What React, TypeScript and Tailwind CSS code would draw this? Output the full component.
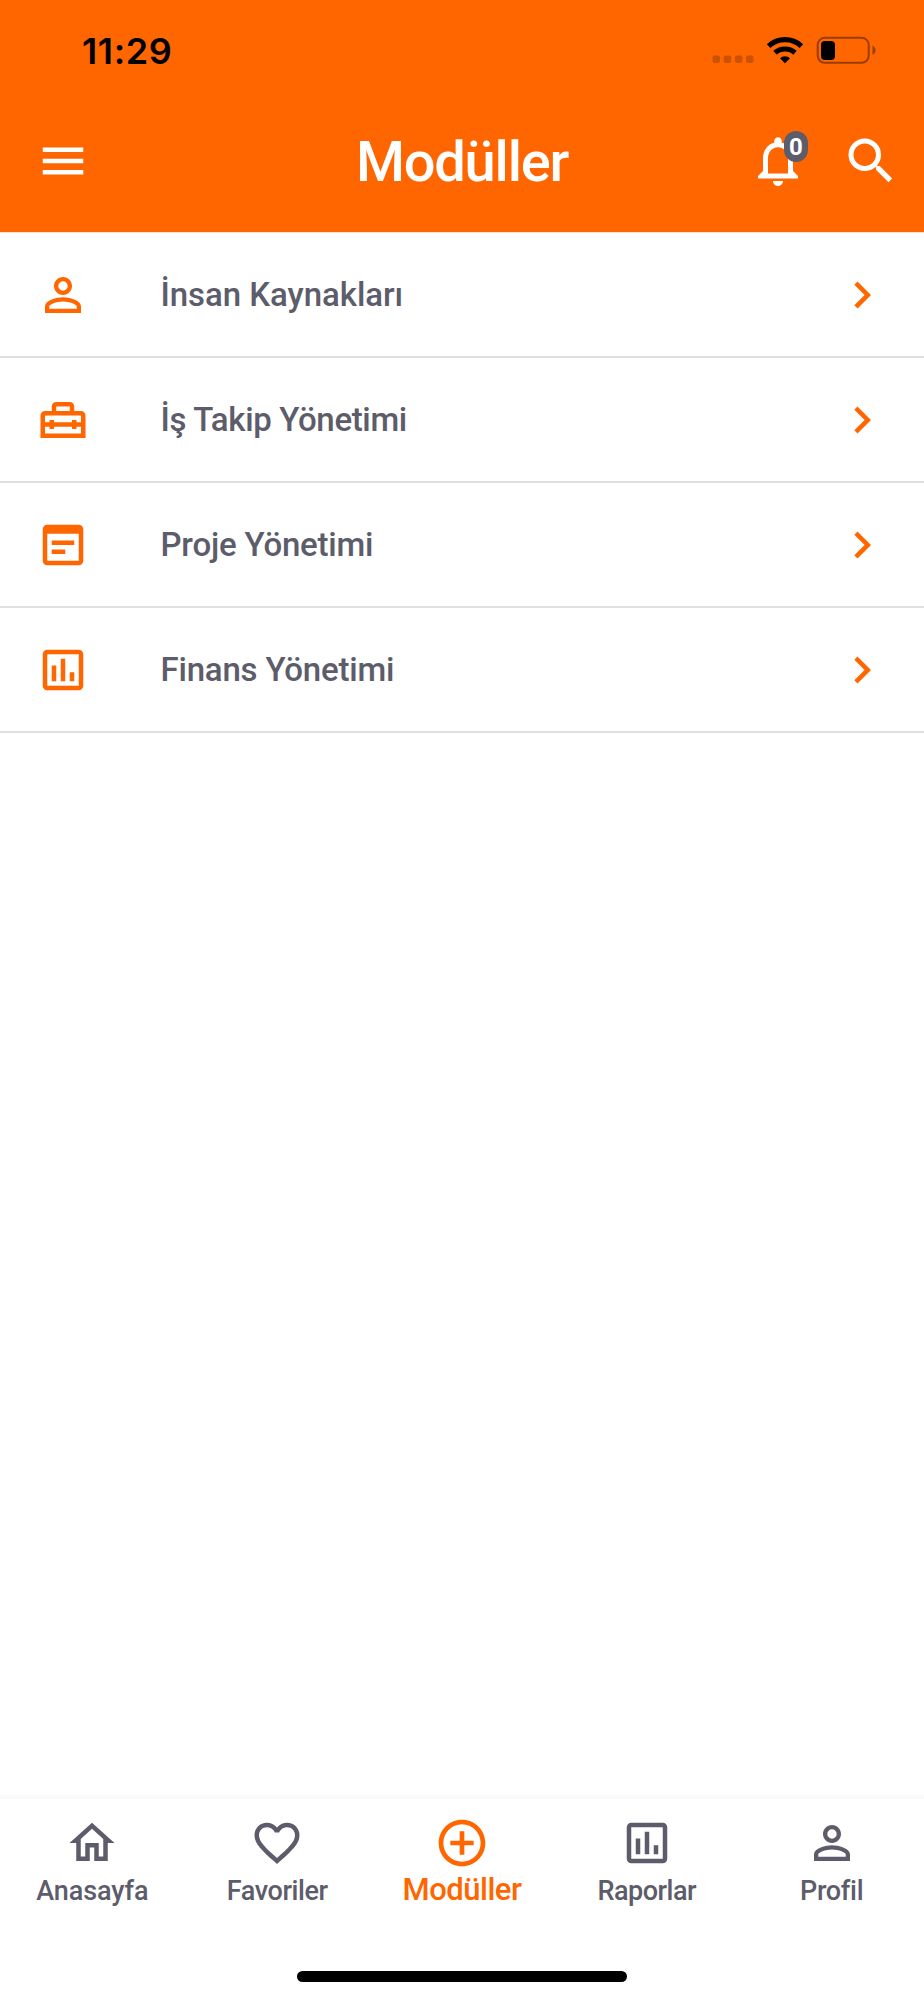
import type { IconType } from 'react-icons';
import {
  MdAddCircleOutline,
  MdChevronRight,
  MdFavoriteBorder,
  MdMenu,
  MdNotificationsNone,
  MdOutlineAssessment,
  MdOutlineHome,
  MdOutlineWysiwyg,
  MdPersonOutline,
  MdSearch,
} from 'react-icons/md';

interface ModuleItem {
  icon: React.ComponentType<{ className?: string }>;
  label: string;
  tracking: string;
}

interface TabItem {
  icon: IconType;
  isActive?: boolean;
  label: string;
  tracking: string;
}

function ToolboxIcon({ className }: { className?: string }) {
  return (
    <svg className={className} fill="currentColor" viewBox="0 0 24 24">
      <path
        clipRule="evenodd"
        d="M9 4h6a2 2 0 0 1 2 2v2h3a2 2 0 0 1 2 2v10H2V10a2 2 0 0 1 2-2h3V6a2 2 0 0 1 2-2Zm0 2v2h6V6H9Zm-5 4v3h2v-1h2v1h8v-1h2v1h2v-3H4Zm0 5v3h16v-3h-2v1h-2v-1H8v1H6v-1H4Z"
        fillRule="evenodd"
      />
    </svg>
  );
}

const modules: ModuleItem[] = [
  { icon: MdPersonOutline, label: 'İnsan Kaynakları', tracking: 'tracking-[-0.05px]' },
  { icon: ToolboxIcon, label: 'İş Takip Yönetimi', tracking: 'tracking-[-0.35px]' },
  { icon: MdOutlineWysiwyg, label: 'Proje Yönetimi', tracking: 'tracking-[-0.2px]' },
  { icon: MdOutlineAssessment, label: 'Finans Yönetimi', tracking: 'tracking-[-0.2px]' },
];

const tabs: TabItem[] = [
  { icon: MdOutlineHome, label: 'Anasayfa', tracking: 'tracking-[-0.1px]' },
  { icon: MdFavoriteBorder, label: 'Favoriler', tracking: 'tracking-[-0.4px]' },
  { icon: MdAddCircleOutline, isActive: true, label: 'Modüller', tracking: 'tracking-[-0.5px]' },
  { icon: MdOutlineAssessment, label: 'Raporlar', tracking: 'tracking-[-0.5px]' },
  { icon: MdPersonOutline, label: 'Profil', tracking: 'tracking-[-0.3px]' },
];

function StatusBar() {
  return (
    <div className="flex h-[100px] items-center justify-between pr-[48px] pl-[82px] text-black">
      <span className="pt-[2px] font-['Inter',sans-serif] text-[36px] leading-none font-semibold tracking-[0.6px]">
        11:29
      </span>
      <svg className="h-[30px] w-[164px]" viewBox="0 0 164 30">
        <g fill="#000" fillOpacity="0.2">
          <rect height="7.5" rx="2" width="7.5" x="0.5" y="20.5" />
          <rect height="7.5" rx="2" width="7.5" x="11.7" y="20.5" />
          <rect height="7.5" rx="2" width="7.5" x="22.9" y="20.5" />
          <rect height="7.5" rx="2" width="7.5" x="34" y="20.5" />
        </g>
        <g fill="none" stroke="#000" strokeWidth="5.2">
          <path d="M56.6 11.2a24 24 0 0 1 32.8 0" />
          <path d="M63 17.8a15 15 0 0 1 20 0" />
        </g>
        <path d="M73 28.2l-5-5a7.600 7.600 0 0 1 10 0Z" />
        <rect
          fill="none"
          height="25"
          rx="7"
          stroke="#000"
          strokeOpacity="0.4"
          strokeWidth="2"
          width="51"
          x="105.700"
          y="2.800"
        />
        <rect height="19" rx="4" width="14" x="109" y="6" />
        <path d="M160.500 10.500c4 2 4 7.500 0 9.500Z" fillOpacity="0.4" />
      </svg>
    </div>
  );
}

function Header() {
  return (
    <header className="h-[233px] border-b border-[#ffe0cc] bg-[#ff6600]">
      <StatusBar />
      <div className="grid h-[122px] grid-cols-[1fr_auto_1fr] items-center text-white">
        <MdMenu className="ml-[35.5px] size-[54px]" />
        <h1 className="pt-px text-[56px] leading-none font-medium tracking-[-1.2px]">Modüller</h1>
        <div className="flex items-center justify-end gap-[33px] pr-[23px]">
          <div className="relative">
            <MdNotificationsNone className="size-[60px]" />
            <span className="absolute top-0 left-[36px] flex h-[31px] w-[24px] items-center justify-center rounded-full bg-[#5c5c6b] text-[24px] leading-none font-bold">
              0
            </span>
          </div>
          <MdSearch className="size-[60px]" />
        </div>
      </div>
    </header>
  );
}

function ModuleRow({ icon: Icon, label, tracking }: ModuleItem) {
  return (
    <li className="flex h-[125px] items-center border-b-2 border-[#dfdfdf] pr-[35.5px] pl-[35.5px]">
      <Icon className="size-[54px] text-[#ff6600]" />
      <span className={`ml-[71px] flex-1 text-[33px] leading-none font-medium ${tracking}`}>{label}</span>
      <MdChevronRight className="size-[54px] text-[#ff6600]" />
    </li>
  );
}

function TabButton({ icon: Icon, isActive = false, label, tracking }: TabItem) {
  return (
    <button className={`flex flex-col items-center ${isActive ? 'text-[#ff6600]' : ''}`} type="button">
      <span className="flex h-[56px] items-center">
        <Icon className={isActive ? 'size-[56px]' : 'size-[54px]'} />
      </span>
      <span
        className={`flex items-center leading-none font-medium ${isActive ? 'h-[36px] text-[31px]' : 'h-[40px] text-[27px]'} ${tracking}`}
      >
        {label}
      </span>
    </button>
  );
}

export default function App() {
  return (
    <div className="flex h-[2000px] w-[924px] flex-col bg-white font-['Roboto',sans-serif] text-[#5c5c6b]">
      <Header />
      <ul className="flex-1">
        {modules.map((item) => (
          <ModuleRow key={item.label} {...item} />
        ))}
      </ul>
      <div className="h-[6px] bg-linear-to-b from-white to-[#f8f8f8]" />
      <nav className="flex h-[201px] flex-col items-center">
        <div className="grid w-full grid-cols-5 items-start pt-[16px]">
          {tabs.map((tab) => (
            <TabButton key={tab.label} {...tab} />
          ))}
        </div>
        <div className="mt-auto mb-[18px] h-[11px] w-[330px] rounded-full bg-black" />
      </nav>
    </div>
  );
}
